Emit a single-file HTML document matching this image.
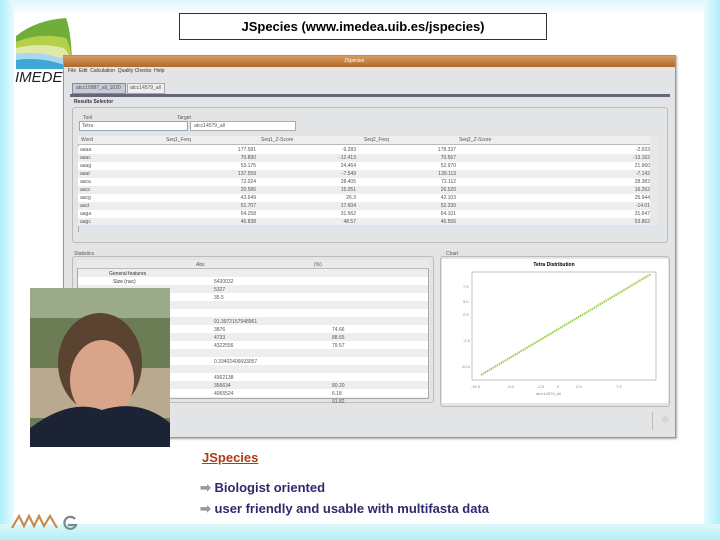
<!DOCTYPE html>
<html><head><meta charset="utf-8"><style>
*{margin:0;padding:0;box-sizing:border-box}
body{width:720px;height:540px;overflow:hidden;background:#fff;position:relative;font-family:"Liberation Sans",sans-serif}
.a{position:absolute}
.t{font-size:5px;color:#555;white-space:nowrap}
</style></head><body>
<div class="a" style="left:0;top:0;width:720px;height:16px;background:linear-gradient(#dff6fb,#fff)"></div>
<div class="a" style="left:0;top:0;width:14px;height:540px;background:linear-gradient(90deg,#aeeffa,#e8fbfd)"></div>
<div class="a" style="left:704px;top:0;width:16px;height:540px;background:linear-gradient(90deg,#e8fbfd,#aeeffa)"></div>
<div class="a" style="left:0;top:524px;width:720px;height:16px;background:linear-gradient(#e0f8fb,#b3f0f8)"></div>
<!-- logo -->
<svg class="a" style="left:14px;top:14px" width="62" height="70" viewBox="0 0 62 70">
<path d="M2 22 Q22 6 52 4 Q58 20 58 56 L2 56Z" fill="#6fae3a"/>
<path d="M2 28 Q26 18 52 24 Q58 34 58 56 L2 56Z" fill="#b5cf49"/>
<path d="M2 34 Q26 28 50 34 Q58 42 58 56 L2 56Z" fill="#dfe9a8"/>
<path d="M2 40 Q28 36 58 48 L58 56 L2 56Z" fill="#a9d8ee"/>
<path d="M2 46 Q30 42 58 54 L58 56 L2 56Z" fill="#3fa6d8"/>
<rect x="0" y="55" width="62" height="4" fill="#fff"/>
<text x="1" y="68" font-family="Liberation Sans" font-style="italic" font-size="15" fill="#222">IMEDE</text>
</svg>
<div class="a" style="left:179px;top:13px;width:368px;height:27px;border:1px solid #333;font-weight:bold;font-size:13px;text-align:center;line-height:26px">JSpecies (www.imedea.uib.es/jspecies)</div>
<!-- window -->
<div class="a" style="left:63px;top:55px;width:613px;height:383px;background:#e2e4e6;border:1px solid #999;box-shadow:1px 1px 2px #aaa">
 <div class="a" style="left:0;top:0;width:611px;height:11px;background:linear-gradient(#d79a5e,#b06a2c)"></div>
 <div class="a t" style="left:280px;top:2px;color:#fff">JSpecies</div>
 <div class="a t" style="left:4px;top:12px;color:#333">File &nbsp;Edit &nbsp;Calculation &nbsp;Quality Checks &nbsp;Help</div>
 <div class="a" style="left:8px;top:27px;width:54px;height:11px;background:#c6cdd8;border:1px solid #889"></div>
 <div class="a t" style="left:12px;top:29px">atcc10987_all_1020</div>
 <div class="a" style="left:63px;top:27px;width:38px;height:11px;background:#eee;border:1px solid #aaa"></div>
 <div class="a t" style="left:66px;top:29px">atcc14579_all</div>
 <div class="a" style="left:6px;top:38px;width:600px;height:3px;background:#667"></div>
 <div class="a t" style="left:10px;top:43px;font-weight:bold;color:#333">Results Selector</div>
 <div class="a" style="left:8px;top:51px;width:596px;height:136px;border:1px solid #bbb;border-radius:3px"></div>
 <div class="a t" style="left:19px;top:59px">Tool</div>
 <div class="a t" style="left:113px;top:59px">Target</div>
 <div class="a" style="left:15px;top:65px;width:109px;height:10px;background:#fff;border:1px solid #8ab"></div>
 <div class="a t" style="left:18px;top:67px">Tetra</div>
 <div class="a" style="left:126px;top:65px;width:106px;height:10px;background:#fff;border:1px solid #aaa"></div>
 <div class="a t" style="left:130px;top:67px">atcc14579_all</div>
 <div class="a" style="left:14px;top:80px;width:580px;height:96px;background:#fff;border:1px solid #aaa"></div>
 <div class="a" style="left:14px;top:80px;width:572px;height:9px;background:#eee;border-bottom:1px solid #bbb"></div>
 <div class="a t" style="left:17px;top:81px">Word</div><div class="a t" style="left:102px;top:81px">Seq1_Freq</div><div class="a t" style="left:197px;top:81px">Seq1_Z-Score</div><div class="a t" style="left:300px;top:81px">Seq2_Freq</div><div class="a t" style="left:395px;top:81px">Seq2_Z-Score</div>
 <div class="a" style="left:14px;top:90px;width:572px;height:80px;background:repeating-linear-gradient(#fff 0 8px,#eee 8px 16px)"></div>
 <div class="a" style="left:586px;top:80px;width:8px;height:96px;background:#e8e8e8"></div>
 <div class="a" style="left:15px;top:169px;width:580px;height:7px;background:#dde6ee"></div>
 <div class="a t" style="left:16px;top:90px;line-height:8px">aaaa<br>aaac<br>aaag<br>aaat<br>aaca<br>aacc<br>aacg<br>aact<br>aaga<br>aagc</div>
 <div class="a t" style="left:140px;top:90px;line-height:8px;text-align:right;width:52px">177.581<br>70.890<br>53.175<br>137.559<br>72.024<br>20.586<br>43.649<br>51.707<br>64.258<br>46.838</div>
 <div class="a t" style="left:240px;top:90px;line-height:8px;text-align:right;width:52px">-9.283<br>-12.413<br>24.464<br>-7.549<br>28.405<br>15.051<br>26.3<br>17.604<br>31.562<br>48.57</div>
 <div class="a t" style="left:340px;top:90px;line-height:8px;text-align:right;width:52px">178.337<br>70.567<br>52.970<br>139.113<br>72.112<br>26.520<br>42.103<br>52.330<br>64.101<br>46.556</div>
 <div class="a t" style="left:530px;top:90px;line-height:8px;text-align:right;width:56px">-2.033<br>-13.162<br>21.960<br>-7.142<br>28.382<br>16.262<br>25.944<br>-14.01<br>31.647<br>53.862</div>
 <div class="a t" style="left:10px;top:195px">Statistics</div>
 <div class="a t" style="left:382px;top:195px">Chart</div>
 <div class="a" style="left:8px;top:200px;width:362px;height:147px;border:1px solid #bbb;border-radius:3px"></div>
 <div class="a" style="left:13px;top:204px;width:352px;height:139px;background:repeating-linear-gradient(#fff 0 8px,#eee 8px 16px);border:1px solid #aaa"></div>
 <div class="a" style="left:13px;top:204px;width:352px;height:9px;background:#eaeaea;border-bottom:1px solid #bbb"></div>
 <div class="a t" style="left:132px;top:206px">Abs</div><div class="a t" style="left:250px;top:206px">(%)</div>
 <div class="a t" style="left:45px;top:214px;line-height:8px;color:#333">General features<br>&nbsp;&nbsp;&nbsp;Size (nuc)</div>
 <div class="a t" style="left:150px;top:222px;line-height:8px">5430032<br>5327<br>35.5<br><br><br>91.3972157948961<br>3876<br>4733<br>4322556<br><br>0.33402406693057<br><br>4362138<br>356634<br>4065524</div>
 <div class="a t" style="left:268px;top:270px;line-height:8px">74.66<br>88.65<br>79.57<br><br><br><br><br>80.20<br>6.18<br>91.82</div>
 <div class="a" style="left:376px;top:200px;width:230px;height:151px;border:1px solid #bbb;border-radius:3px"></div>
 <div class="a" style="left:378px;top:203px;width:226px;height:144px;background:#fff"></div>
 <div class="a" style="left:588px;top:356px;width:1px;height:18px;background:#bbb"></div>
 <div class="a" style="left:597px;top:359px;font-size:10px;color:#ccc">✻</div>
</div>
<svg class="a" style="left:441px;top:258px" width="226" height="144">
<text x="113" y="8" font-size="5" font-weight="bold" text-anchor="middle" font-family="Liberation Sans">Tetra Distribution</text>
<rect x="31" y="14" width="184" height="108" fill="none" stroke="#999" stroke-width="0.6"/>
<line x1="40" y1="117" x2="210" y2="16" stroke="#9c4" stroke-width="2" stroke-dasharray="1.5 0.8"/>
<g font-size="4" fill="#888" font-family="Liberation Sans"><text x="22" y="30">7.5</text><text x="22" y="45">5.0</text><text x="22" y="58">2.5</text><text x="22" y="84">-2.5</text><text x="20" y="110">-10.0</text>
<text x="30" y="130">-10.0</text><text x="66" y="130">-5.0</text><text x="96" y="130">-2.5</text><text x="116" y="130">0</text><text x="135" y="130">2.5</text><text x="175" y="130">7.5</text><text x="95" y="137">atcc14579_all</text></g>
</svg>
<!-- photo -->
<svg class="a" style="left:30px;top:288px" width="140" height="159">
<rect width="140" height="159" fill="#6c7d55"/>
<rect y="0" width="140" height="30" fill="#9bab8a"/>
<rect y="80" width="140" height="50" fill="#b9a98f"/>
<ellipse cx="70" cy="75" rx="42" ry="50" fill="#5a4330"/>
<ellipse cx="72" cy="92" rx="32" ry="40" fill="#d9a58a"/>
<path d="M0 159 L0 140 Q40 110 72 122 Q110 110 140 135 L140 159Z" fill="#1c2334"/>
</svg>
<div class="a" style="left:202px;top:450px;font-size:13px;font-weight:bold;color:#b03a14;text-decoration:underline">JSpecies</div>
<div class="a" style="left:200px;top:477px;font-size:13px;font-weight:bold;color:#2d2a6e;line-height:21px"><span style="color:#999">➡</span> Biologist oriented<br><span style="color:#999">➡</span> user friendly and usable with multifasta data</div>
<svg class="a" style="left:10px;top:512px" width="72" height="18"><path d="M2 16 L9 4 L14 14 L19 4 L24 14 L29 4 L34 14 L40 4 L47 16" fill="none" stroke="#c98a4e" stroke-width="2.2"/><path d="M65 7 A6 6 0 1 0 66 13 L58 13" fill="none" stroke="#7a8a8e" stroke-width="2.2"/></svg>
</body></html>
